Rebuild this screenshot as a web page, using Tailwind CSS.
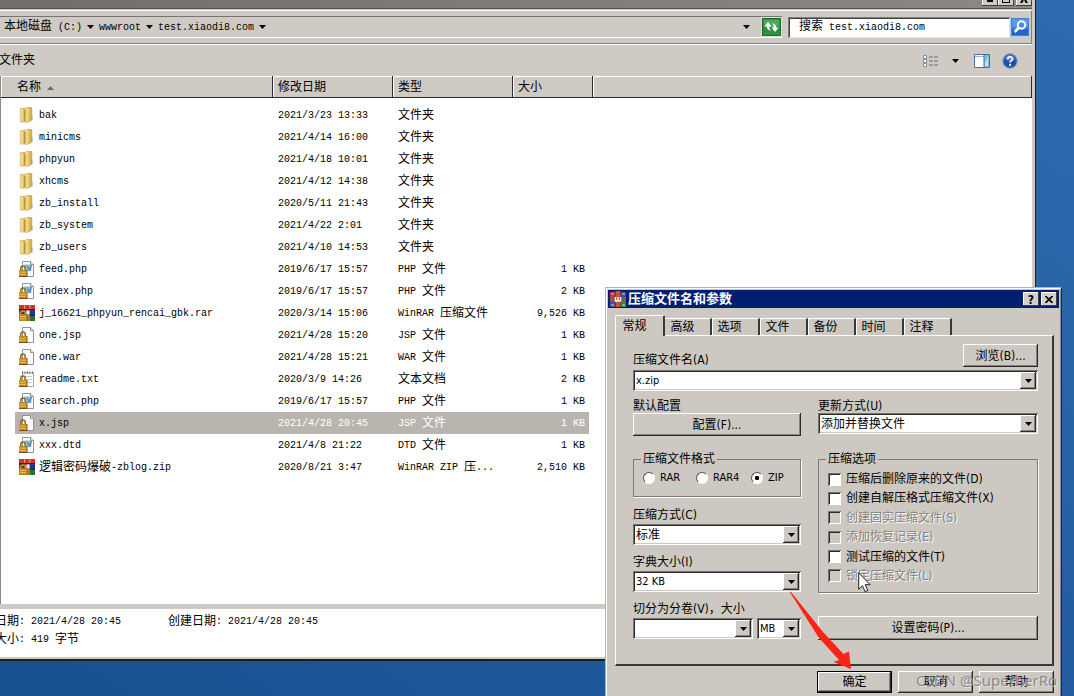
<!DOCTYPE html>
<html lang="zh-CN">
<head>
<meta charset="utf-8">
<title>test.xiaodi8.com</title>
<script src="https://cdn.jsdelivr.net/npm/@tailwindcss/browser@4"></script>
</head>
<body class="h-screen overflow-hidden bg-[#1b5799] text-black">

<svg class="absolute h-0 w-0" aria-hidden="true">
  <defs>
    <linearGradient id="gold" x1="0" x2="1"><stop offset="0" stop-color="#fbefae"/><stop offset=".6" stop-color="#e6c564"/><stop offset="1" stop-color="#c99f3c"/></linearGradient>
    <symbol id="lock" viewBox="0 0 16 16">
      <path d="M1.8 9.5V7.6a2.2 2.6 0 0 1 4.4 0v1.9" fill="none" stroke="#8a6a2a" stroke-width="1.5"/>
      <rect x="0" y="9" width="8" height="6.5" fill="#c28a1c"/><path d="M0 11.2h8M0 13.4h8" stroke="#f0c559" stroke-width=".9"/><path d="M0 15.5h8V9" fill="none" stroke="#7a5412"/>
    </symbol>
    <symbol id="page" viewBox="0 0 16 16">
      <path d="M3.5.5h8l3 3v12h-11z" fill="#fdfdfd" stroke="#8f9396"/><path d="M11.5.5v3h3" fill="#e6e6e6" stroke="#8f9396"/>
    </symbol>
    <symbol id="folder" viewBox="0 0 16 16">
      <path d="M1.300 1.500h5v13l-1.500.5H1.300z" fill="url(#gold)" stroke="#cfae55" stroke-width=".7"/>
      <path d="M5.500 2.500 7.500.5h5.300v12L11 14.500 6.500 15.500l-1-1z" fill="url(#gold)" stroke="#c9a548" stroke-width=".7"/>
      <path d="M6 3v11.500" stroke="#9c7c2e" stroke-width="1"/><path d="M12.800 8.500v5" stroke="#8aa4a8" stroke-width="1.200"/>
    </symbol>
    <symbol id="script" viewBox="0 0 16 16">
      <use href="#page"/><path d="M5 3.500h6.500L10.500 9H6z" fill="#8fbedb"/><path d="M8 4h5l-1 6H9z" fill="#5b97c0"/><path d="M9 5h2" stroke="#cfe6f4"/><use href="#lock"/>
    </symbol>
    <symbol id="blank" viewBox="0 0 16 16"><use href="#page"/><use href="#lock"/></symbol>
    <symbol id="note" viewBox="0 0 16 16">
      <path d="M3.500 2h11v13.500h-11z" fill="#fdfdfd" stroke="#a6a9ab"/><path d="M3 1.500h12" stroke="#555" stroke-width="2" stroke-dasharray="1 1.500"/><path d="M5 5.500h8M5 8.500h8M8 11.500h5" stroke="#c2cad0"/><use href="#lock"/>
    </symbol>
    <symbol id="rar" viewBox="0 0 16 16">
      <path d="M0 0h16v5H0z" fill="#cf3527"/><path d="M5.500 0v4M11 0v4" stroke="#f3b09c" stroke-width=".8"/><path d="M0 4.500h16" stroke="#5c1712"/>
      <path d="M0 5h6v5H0z" fill="#4a3a26"/><path d="M11 5h5v5.500h-5z" fill="#2336a0"/><path d="M6 5h5v5H6z" fill="#8b4a1f"/><path d="M7.500 5.500h3v4h-3z" fill="#f6f2ea"/>
      <path d="M8 10h8v6H8z" fill="#1f7636"/><path d="M11 10.300h5" stroke="#12242c"/><path d="M8.500 10h2.500v6H8.500z" fill="#b5762a"/>
      <path d="M1.500 9V7.500q2.500-3 5 0V9" fill="none" stroke="#caa13d" stroke-width="1.400"/><path d="M0 9h8.500v7H0z" fill="#b8811f"/><path d="M1 11.500h6M1 13.700h6" stroke="#f1cc62"/>
    </symbol>
    <symbol id="books" viewBox="0 0 16 16">
      <path d="M0 1h5v15H0z" fill="#b03a4a"/><path d="M5.500 0h5v16h-5z" fill="#c9552a"/><path d="M11 1h5v15h-5z" fill="#31539e"/>
      <path d="M0 11h5v5H0z" fill="#3c4fa0"/><path d="M11 11h5v5h-5z" fill="#2f8a4a"/><path d="M0 6h16v5H0z" fill="#8a5a3c"/><path d="M1 3h3M12 3h3M1 14h3M12 14h3" stroke="#e6cfc0"/><path d="M5.500 6v4h5V6M8 6v4" fill="none" stroke="#fff" stroke-width="1.400"/>
    </symbol>
    <symbol id="down" viewBox="0 0 7 4"><path d="M0 0h7L3.500 4z" fill="#000"/></symbol>
  </defs>
</svg>

<main class="relative h-full overflow-hidden bg-linear-to-bl from-[#2e6aae] to-[#17508f]">

  <!-- Explorer window -->
  <section class="absolute top-0 left-0 right-[38px] border-r border-b-2 border-[#15202e] bg-[#cfcbc4] pr-[3px] pb-[2px] font-['Liberation_Mono','Noto_Sans_CJK_SC',monospace] text-[10px]">
    <header class="flex h-[9px] justify-end border-b border-[#55534f] bg-linear-to-r from-[#716f6b] to-[#8b8986]">
      <button aria-label="最小化" class="flex h-[6px] w-4 items-start justify-center bg-[#cfcbc4] shadow-[inset_-1px_-1px_#404040,inset_1px_0_#fff]"><span class="h-[2px] w-[6px] bg-black"></span></button>
      <button aria-label="最大化" class="flex h-[6px] w-4 items-start justify-center bg-[#cfcbc4] shadow-[inset_-1px_-1px_#404040,inset_1px_0_#fff]"><span class="h-[3px] w-2 border border-t-0 border-black"></span></button>
      <button aria-label="关闭" class="ml-[2px] flex h-[6px] w-4 items-start justify-center bg-[#cfcbc4] shadow-[inset_-1px_-1px_#404040,inset_1px_0_#fff]"><svg class="h-[3px] w-[8px]" viewBox="0 0 8 3"><path d="M3 0 1 3M5 0l2 3" stroke="#000" stroke-width="2"/></svg></button>
    </header>

    <nav class="mt-px flex h-[34px] items-center gap-[6px] border-t border-r border-b border-t-white border-r-[#808080] border-b-[#808080] pr-px">
      <div class="flex h-[22px] flex-1 items-center gap-[5px] border-t border-b border-t-[#77746f] border-b-white pl-1 whitespace-pre">
        <a href="#"><span class="text-xs">本地磁盘</span> (C:)</a>
        <svg class="h-1 w-[7px]"><use href="#down"/></svg>
        <a href="#">wwwroot</a>
        <svg class="h-1 w-[7px]"><use href="#down"/></svg>
        <a href="#">test.xiaodi8.com</a>
        <svg class="h-1 w-[7px]"><use href="#down"/></svg>
        <button aria-label="历史记录" class="ml-auto mr-[5px] px-px"><svg class="h-1 w-[7px]"><use href="#down"/></svg></button>
        <button aria-label="刷新" class="flex h-5 w-[21px] bg-[#2f9140] shadow-[inset_0_0_0_1px_#d6e8d2,inset_0_0_0_2px_#1d6a2c]">
          <svg class="h-5 w-[21px] shrink-0" viewBox="0 0 21 20"><path d="M3 3h15v6Q10 12 3 9z" fill="#5db267" opacity=".7"/><path d="M3.500 9.500 7 5l3.500 4.500H8.200c0 2 .5 3 2 4-3-.2-4.400-1.500-4.400-4zM17.500 10.500 14 15l-3.500-4.500h2.300c0-2-.5-3-2-4 3 .2 4.400 1.500 4.400 4z" fill="#fff"/></svg>
        </button>
      </div>
      <form class="flex h-[22px] w-[242px] items-center">
        <label for="q" class="flex h-[21px] flex-1 items-center gap-[6px] bg-white pl-[11px] shadow-[inset_1px_1px_#808080,inset_-1px_-1px_#e8e6e2,inset_2px_2px_#404040]"><span class="text-xs">搜索</span>
        <input id="q" value="test.xiaodi8.com" class="w-[140px] bg-transparent outline-none"></label>
        <button type="button" aria-label="搜索" class="flex h-5 w-5 bg-[#3a84dc] shadow-[inset_0_0_0_1px_#b9cfea]">
          <svg class="h-5 w-5 shrink-0" viewBox="0 0 20 20"><path d="M2 2h16v7Q10 13 2 9z" fill="#6aa9ee" opacity=".6"/><path d="M2 12h16v6H2z" fill="#1e56b8" opacity=".7"/><circle cx="11.500" cy="8" r="3.700" fill="#4a8fe0" stroke="#fff" stroke-width="2"/><path d="m8.700 11-4 4" stroke="#fff" stroke-width="2.600"/></svg>
        </button>
      </form>
    </nav>

    <div class="flex h-8 items-center border-t border-white">
      <button class="-ml-px text-xs">文件夹</button>
      <button aria-label="视图" class="ml-auto"><svg class="h-3 w-4" viewBox="0 0 16 12"><g fill="#fff" stroke="#6c7b8c" stroke-width=".8"><path d="M.5.5h3v3h-3zM.5 4.500h3v3h-3zM.5 8.500h3v3h-3z"/></g><path d="M6 2h10M6 6h10M6 10h10" stroke="#686f78" stroke-dasharray="4 1"/></svg></button>
      <button aria-label="更改视图" class="ml-[13px]"><svg class="h-1 w-[7px]"><use href="#down"/></svg></button>
      <button aria-label="预览窗格" class="ml-[15px]"><svg class="h-[14px] w-4" viewBox="0 0 16 14"><path d="M.5.500h15v13H.5z" fill="#fff" stroke="#456f98"/><path d="M1 2.500h9" stroke="#9fb8cf"/><path d="M10 1h5v12h-5z" fill="#79bfe0"/><path d="M10 1v12" stroke="#456f98"/><path d="m11 9 3-6v9h-3z" fill="#bfe2f3"/></svg></button>
      <button aria-label="帮助" class="ml-3 mr-[14px]"><svg class="h-4 w-4" viewBox="0 0 16 16"><circle cx="8" cy="8" r="7.300" fill="#1f4fae" stroke="#8ea3c4" stroke-width="1.200"/><path d="M2.500 6.500a5.600 5.600 0 0 1 11 0Q8 9 2.500 6.500z" fill="#6f97dc" opacity=".6"/><path d="M5.800 6.200c0-3 4.600-3 4.600-.3 0 1.700-2.300 1.700-2.300 3.600" fill="none" stroke="#fff" stroke-width="1.800"/><circle cx="8.100" cy="11.900" r="1.100" fill="#fff"/></svg></button>
    </div>

    <div class="h-[528px] border-l border-[#8d8a85] bg-white">
      <table class="w-full table-fixed border-collapse">
        <colgroup><col class="w-[272px]"><col class="w-[120px]"><col class="w-[120px]"><col class="w-[80px]"><col></colgroup>
        <thead>
          <tr class="h-[22px] bg-[#cfcbc4] text-left text-xs">
            <th class="p-0 pt-[2px] pl-4 font-normal shadow-[inset_-1px_-1px_#2b2a28,inset_1px_1px_#fff]"><span class="flex items-center gap-[6px]">名称<svg class="h-1 w-[7px]" viewBox="0 0 7 4"><path d="M0 4h7L3.500 0z" fill="#6d6a66"/></svg></span></th>
            <th class="p-0 pt-[2px] pl-[5px] font-normal shadow-[inset_-1px_-1px_#2b2a28,inset_1px_1px_#fff]">修改日期</th>
            <th class="p-0 pt-[2px] pl-[5px] font-normal shadow-[inset_-1px_-1px_#2b2a28,inset_1px_1px_#fff]">类型</th>
            <th class="p-0 pt-[2px] pl-[5px] font-normal shadow-[inset_-1px_-1px_#2b2a28,inset_1px_1px_#fff]">大小</th>
            <td class="p-0 shadow-[inset_-1px_-1px_#2b2a28,inset_1px_1px_#fff]"></td>
          </tr>
          <tr class="h-[6px]"><td class="p-0" colspan="5"></td></tr>
        </thead>
        <tbody id="files"></tbody>
      </table>
    </div>

    <footer class="mt-[5px] h-12 bg-white pt-1 leading-[18px]">
      <p class="flex h-[18px] items-center whitespace-pre"><span class="-ml-[5px] text-xs leading-[18px]">日期</span><span class="w-[149px]">: 2021/4/28 20:45</span><span class="text-xs leading-[18px]">创建日期</span><span>: 2021/4/28 20:45</span></p>
      <p class="-ml-[5px] flex h-[18px] items-center whitespace-pre"><span class="text-xs leading-[18px]">大小</span><span>: 419 </span><span class="text-xs leading-[18px]">字节</span></p>
    </footer>
  </section>

  <!-- Archive dialog -->
  <section role="dialog" aria-labelledby="dlg" class="absolute top-[287px] left-[605px] w-[457px] border border-[#b5b1aa] border-r-[#2b2a28] bg-[#cdc9c2] p-[2px] pb-10 font-['DejaVu_Sans_Condensed','Noto_Sans_CJK_SC',sans-serif] text-xs leading-[14px] shadow-[inset_1px_1px_#fff,inset_-1px_0_#8c8984]">
    <header class="flex h-[18px] items-center gap-[2px] bg-[#00206f] pl-[2px] pr-[2px] text-white">
      <svg class="h-4 w-4"><use href="#books"/></svg>
      <h1 id="dlg" class="flex-1 text-[13px] font-bold">压缩文件名和参数</h1>
      <button aria-label="帮助" class="grid h-[14px] w-4 place-items-center bg-[#d4d0c8] text-xs font-bold text-black shadow-[inset_-1px_-1px_#404040,inset_1px_1px_#fff]">?</button>
      <button aria-label="关闭" class="grid h-[14px] w-4 place-items-center bg-[#d4d0c8] shadow-[inset_-1px_-1px_#404040,inset_1px_1px_#fff]"><svg class="h-[7px] w-2" viewBox="0 0 8 7"><path d="m.5 0 7 7M7.500 0l-7 7" stroke="#000" stroke-width="1.700"/></svg></button>
    </header>

    <div class="pt-[7px] pr-[5px] pl-[7px]">
      <div role="tablist" class="flex items-end">
        <button role="tab" aria-selected="true" class="z-10 -mb-px h-[21px] w-[50px] rounded-t-xs border-t border-r-2 border-l border-t-white border-r-[#3b3936] border-l-white bg-[#cdc9c2] pr-[10px] pb-px">常规</button>
        <button role="tab" class="h-[17px] w-[47px] border-t border-r-2 border-t-white border-r-[#3b3936] pr-[10px]">高级</button>
        <button role="tab" class="h-[17px] w-12 border-t border-r-2 border-l border-t-white border-r-[#3b3936] border-l-white pr-3">选项</button>
        <button role="tab" class="h-[17px] w-12 border-t border-r-2 border-l border-t-white border-r-[#3b3936] border-l-white pr-3">文件</button>
        <button role="tab" class="h-[17px] w-12 border-t border-r-2 border-l border-t-white border-r-[#3b3936] border-l-white pr-3">备份</button>
        <button role="tab" class="h-[17px] w-12 border-t border-r-2 border-l border-t-white border-r-[#3b3936] border-l-white pr-3">时间</button>
        <button role="tab" class="h-[17px] w-12 border-t border-r-2 border-l border-t-white border-r-[#3b3936] border-l-white pr-3">注释</button>
      </div>

      <form class="h-[331px] border-t border-r-2 border-b-2 border-l border-t-white border-r-[#3b3936] border-b-[#3b3936] border-l-white pt-2 pr-[14px] pl-[17px]">
        <div class="flex items-end justify-between">
          <label for="arc">压缩文件名(A)</label>
          <button type="button" class="h-[23px] w-[75px] bg-[#cdc9c2] shadow-[inset_-1px_-1px_#2b2a28,inset_1px_1px_#fff,inset_-2px_-2px_#85827d]">浏览(B)...</button>
        </div>
        <div class="mt-[3px] flex h-[21px] items-center bg-white p-[2px] shadow-[inset_1px_1px_#77746f,inset_-1px_-1px_#fff,inset_2px_2px_#2b2a28,inset_-2px_-2px_#cdc9c2]">
          <input id="arc" value="x.zip" class="min-w-0 flex-1 bg-transparent pl-px text-[11px] outline-none">
          <button type="button" aria-label="历史" class="grid h-[17px] w-4 place-items-center bg-[#cdc9c2] shadow-[inset_-1px_-1px_#2b2a28,inset_1px_1px_#fff,inset_-2px_-2px_#85827d]"><svg class="h-1 w-[7px]"><use href="#down"/></svg></button>
        </div>

        <div class="mt-2 grid grid-cols-[168px_1fr] gap-x-[17px]">
          <div class="flex flex-col">
            <span id="prof">默认配置</span>
            <button type="button" aria-describedby="prof" class="h-[23px] bg-[#cdc9c2] shadow-[inset_-1px_-1px_#2b2a28,inset_1px_1px_#fff,inset_-2px_-2px_#85827d]">配置(F)...</button>

            <fieldset class="mt-4 h-[45px] min-w-0 border border-[#7e7b76] px-[9px] shadow-[1px_1px_#fff]">
              <legend class="-ml-[2px] px-[2px]">压缩文件格式</legend>
              <div class="flex pt-[5px] text-[11px]">
                <label class="flex w-[53px] items-center gap-[5px]"><input type="radio" name="fmt" class="h-3 w-3 appearance-none rounded-full border border-t-[#55534f] border-r-white border-b-white border-l-[#55534f] bg-white">RAR</label>
                <label class="flex w-[55px] items-center gap-[5px]"><input type="radio" name="fmt" class="h-3 w-3 appearance-none rounded-full border border-t-[#55534f] border-r-white border-b-white border-l-[#55534f] bg-white">RAR4</label>
                <label class="flex items-center gap-[5px]"><input type="radio" name="fmt" checked class="h-3 w-3 appearance-none rounded-full border border-t-[#55534f] border-r-white border-b-white border-l-[#55534f] bg-white bg-radial from-black from-25% to-white to-35%">ZIP</label>
              </div>
            </fieldset>

            <label for="method" class="mt-[11px]">压缩方式(C)</label>
            <div class="relative mt-[2px]">
              <select id="method" class="block h-[21px] w-full appearance-none bg-white pl-[3px] shadow-[inset_1px_1px_#77746f,inset_-1px_-1px_#fff,inset_2px_2px_#2b2a28,inset_-2px_-2px_#cdc9c2]"><option>标准</option></select>
              <span class="pointer-events-none absolute top-[2px] right-[2px] grid h-[17px] w-4 place-items-center bg-[#cdc9c2] shadow-[inset_-1px_-1px_#2b2a28,inset_1px_1px_#fff,inset_-2px_-2px_#85827d]"><svg class="h-1 w-[7px]"><use href="#down"/></svg></span>
            </div>

            <label for="dict" class="mt-[10px]">字典大小(I)</label>
            <div class="relative mt-[2px]">
              <select id="dict" class="block h-[21px] w-full appearance-none bg-white pl-[3px] text-[11px] shadow-[inset_1px_1px_#77746f,inset_-1px_-1px_#fff,inset_2px_2px_#2b2a28,inset_-2px_-2px_#cdc9c2]"><option>32 KB</option></select>
              <span class="pointer-events-none absolute top-[2px] right-[2px] grid h-[17px] w-4 place-items-center bg-[#cdc9c2] shadow-[inset_-1px_-1px_#2b2a28,inset_1px_1px_#fff,inset_-2px_-2px_#85827d]"><svg class="h-1 w-[7px]"><use href="#down"/></svg></span>
            </div>

            <label for="vol" class="mt-[10px]">切分为分卷(V)，大小</label>
            <div class="mt-[2px] flex gap-1">
              <div class="flex h-[21px] min-w-0 flex-1 items-center bg-white p-[2px] shadow-[inset_1px_1px_#77746f,inset_-1px_-1px_#fff,inset_2px_2px_#2b2a28,inset_-2px_-2px_#cdc9c2]">
                <input id="vol" class="min-w-0 flex-1 bg-transparent pl-px outline-none">
                <button type="button" aria-label="分卷大小" class="grid h-[17px] w-4 place-items-center bg-[#cdc9c2] shadow-[inset_-1px_-1px_#2b2a28,inset_1px_1px_#fff,inset_-2px_-2px_#85827d]"><svg class="h-1 w-[7px]"><use href="#down"/></svg></button>
              </div>
              <div class="relative">
                <select aria-label="单位" class="block h-[21px] w-11 appearance-none bg-white pl-[3px] text-[11px] shadow-[inset_1px_1px_#77746f,inset_-1px_-1px_#fff,inset_2px_2px_#2b2a28,inset_-2px_-2px_#cdc9c2]"><option>MB</option></select>
                <span class="pointer-events-none absolute top-[2px] right-[2px] grid h-[17px] w-4 place-items-center bg-[#cdc9c2] shadow-[inset_-1px_-1px_#2b2a28,inset_1px_1px_#fff,inset_-2px_-2px_#85827d]"><svg class="h-1 w-[7px]"><use href="#down"/></svg></span>
              </div>
            </div>
          </div>

          <div class="flex flex-col">
            <label for="upd">更新方式(U)</label>
            <div class="relative">
              <select id="upd" class="block h-[21px] w-full appearance-none bg-white pl-[3px] shadow-[inset_1px_1px_#77746f,inset_-1px_-1px_#fff,inset_2px_2px_#2b2a28,inset_-2px_-2px_#cdc9c2]"><option>添加并替换文件</option></select>
              <span class="pointer-events-none absolute top-[2px] right-[2px] grid h-[17px] w-4 place-items-center bg-[#cdc9c2] shadow-[inset_-1px_-1px_#2b2a28,inset_1px_1px_#fff,inset_-2px_-2px_#85827d]"><svg class="h-1 w-[7px]"><use href="#down"/></svg></span>
            </div>

            <fieldset class="mt-[18px] h-[141px] min-w-0 border border-[#7e7b76] px-[9px] shadow-[1px_1px_#fff]">
              <legend class="-ml-[2px] px-[2px]">压缩选项</legend>
              <div class="mt-[3px] flex h-[117px] flex-col justify-between py-[3px]">
                <label class="flex items-center gap-[5px]"><input type="checkbox" class="h-[13px] w-[13px] appearance-none bg-white shadow-[inset_1px_1px_#77746f,inset_-1px_-1px_#fff,inset_2px_2px_#2b2a28]">压缩后删除原来的文件(D)</label>
                <label class="flex items-center gap-[5px]"><input type="checkbox" class="h-[13px] w-[13px] appearance-none bg-white shadow-[inset_1px_1px_#77746f,inset_-1px_-1px_#fff,inset_2px_2px_#2b2a28]">创建自解压格式压缩文件(X)</label>
                <label class="flex items-center gap-[5px] text-[#85827d] text-shadow-[1px_1px_0_#fff]"><input type="checkbox" disabled class="h-[13px] w-[13px] appearance-none shadow-[inset_1px_1px_#77746f,inset_-1px_-1px_#fff,inset_2px_2px_#2b2a28]">创建固实压缩文件(S)</label>
                <label class="flex items-center gap-[5px] text-[#85827d] text-shadow-[1px_1px_0_#fff]"><input type="checkbox" disabled class="h-[13px] w-[13px] appearance-none shadow-[inset_1px_1px_#77746f,inset_-1px_-1px_#fff,inset_2px_2px_#2b2a28]">添加恢复记录(E)</label>
                <label class="flex items-center gap-[5px]"><input type="checkbox" class="h-[13px] w-[13px] appearance-none bg-white shadow-[inset_1px_1px_#77746f,inset_-1px_-1px_#fff,inset_2px_2px_#2b2a28]">测试压缩的文件(T)</label>
                <label class="flex items-center gap-[5px] text-[#85827d] text-shadow-[1px_1px_0_#fff]"><input type="checkbox" disabled class="h-[13px] w-[13px] appearance-none shadow-[inset_1px_1px_#77746f,inset_-1px_-1px_#fff,inset_2px_2px_#2b2a28]">锁定压缩文件(L)</label>
              </div>
            </fieldset>
            <button type="button" class="mt-[23px] h-6 bg-[#cdc9c2] shadow-[inset_-1px_-1px_#2b2a28,inset_1px_1px_#fff,inset_-2px_-2px_#85827d]">设置密码(P)...</button>
          </div>
        </div>
      </form>

      <div class="flex justify-end gap-[6px] pt-[5px]">
        <button class="h-[22px] w-[75px] border border-black bg-[#cdc9c2] shadow-[inset_-1px_-1px_#2b2a28,inset_1px_1px_#fff,inset_-2px_-2px_#85827d]">确定</button>
        <button class="h-[22px] w-[75px] bg-[#cdc9c2] shadow-[inset_-1px_-1px_#2b2a28,inset_1px_1px_#fff,inset_-2px_-2px_#85827d]">取消</button>
        <button class="h-[22px] w-[75px] bg-[#cdc9c2] shadow-[inset_-1px_-1px_#2b2a28,inset_1px_1px_#fff,inset_-2px_-2px_#85827d]">帮助</button>
      </div>
    </div>
  </section>

  <!-- Pointer, annotation arrow and watermark lie over the windows -->
  <svg class="absolute top-[572px] left-[858px] h-[21px] w-[13px]" viewBox="0 0 13 21" aria-hidden="true"><path d="M.7.800v16.500l3.800-3.600 2.600 6 2.700-1.200-2.600-5.800h5z" fill="#fff" stroke="#222"/></svg>
  <svg class="absolute top-[590px] left-[788px] h-20 w-16" viewBox="0 0 64 80" aria-hidden="true"><path d="M1.500 1.500 3 2 35 42 55.500 64 61 61.500 63 79 45.500 72 51 70 31 48z" fill="#fb2416"/></svg>
  <p class="absolute top-[669px] left-[916px] font-['Noto_Sans',sans-serif] text-[15px] leading-[22px] whitespace-nowrap text-[#77757b]/80 text-shadow-[1px_1px_0_#ffffff80]">CSDN @SuperherRo</p>
</main>

<script>
const rows = [
  ['folder', 'bak', '2021/3/23 13:33', '文件夹', ''],
  ['folder', 'minicms', '2021/4/14 16:00', '文件夹', ''],
  ['folder', 'phpyun', '2021/4/18 10:01', '文件夹', ''],
  ['folder', 'xhcms', '2021/4/12 14:38', '文件夹', ''],
  ['folder', 'zb_install', '2020/5/11 21:43', '文件夹', ''],
  ['folder', 'zb_system', '2021/4/22 2:01', '文件夹', ''],
  ['folder', 'zb_users', '2021/4/10 14:53', '文件夹', ''],
  ['script', 'feed.php', '2019/6/17 15:57', 'PHP 文件', '1 KB'],
  ['script', 'index.php', '2019/6/17 15:57', 'PHP 文件', '2 KB'],
  ['rar', 'j_16621_phpyun_rencai_gbk.rar', '2020/3/14 15:06', 'WinRAR 压缩文件', '9,526 KB'],
  ['blank', 'one.jsp', '2021/4/28 15:20', 'JSP 文件', '1 KB'],
  ['blank', 'one.war', '2021/4/28 15:21', 'WAR 文件', '1 KB'],
  ['note', 'readme.txt', '2020/3/9 14:26', '文本文档', '2 KB'],
  ['script', 'search.php', '2019/6/17 15:57', 'PHP 文件', '1 KB'],
  ['blank', 'x.jsp', '2021/4/28 20:45', 'JSP 文件', '1 KB', true],
  ['script', 'xxx.dtd', '2021/4/8 21:22', 'DTD 文件', '1 KB'],
  ['rar', '逻辑密码爆破-zblog.zip', '2020/8/21 3:47', 'WinRAR ZIP 压...', '2,510 KB'],
];
// Han characters are set two pixels larger than the half-width Latin ones.
const parts = s => s.match(/[\u4e00-\u9fff]+|[^\u4e00-\u9fff]+/g)
  .map(p => /[\u4e00-\u9fff]/.test(p) ? `<span class="text-xs">${p}</span>` : `<span>${p}</span>`).join('');
document.getElementById('files').innerHTML = rows.map(([icon, name, date, type, size, on]) => {
  const bg = on ? 'bg-[#b9b5ae]' : '';
  const fg = on ? 'text-white' : '';
  return `<tr class="h-[22px]">
    <td class="p-0 pl-[14px]"><div class="flex h-[22px] items-center gap-1 pl-1 ${bg}"><svg class="h-4 w-4 shrink-0"><use href="#${icon}"/></svg><span class="flex items-center pt-px whitespace-pre">${parts(name)}</span></div></td>
    <td class="p-0"><div class="flex h-[22px] items-center pt-px pl-[5px] whitespace-pre ${bg} ${fg}">${date}</div></td>
    <td class="p-0"><div class="flex h-[22px] items-center pt-px pl-[5px] whitespace-pre ${bg} ${fg}">${parts(type)}</div></td>
    <td class="p-0 pr-1"><div class="flex h-[22px] items-center justify-end pt-px pr-1 whitespace-pre ${bg} ${fg}">${size}</div></td>
    <td class="p-0"></td></tr>`;
}).join('');
</script>
</body>
</html>
